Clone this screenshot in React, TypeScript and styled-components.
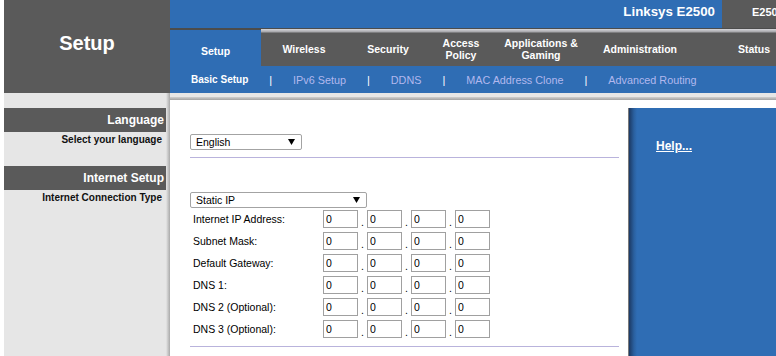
import React from "react";
import styled, { createGlobalStyle } from "styled-components";

//data
const tabs = [
  { label: "Setup", width: 91, active: true },
  { label: "Wireless", width: 86 },
  { label: "Security", width: 82 },
  { label: "Access\nPolicy", width: 64 },
  { label: "Applications &\nGaming", width: 96 },
  { label: "Administration", width: 102 },
  { label: "Status", width: 126 },
];

const subLinks = [
  "Basic Setup",
  "IPv6 Setup",
  "DDNS",
  "MAC Address Clone",
  "Advanced Routing",
];

const ipRows = [
  "Internet IP Address:",
  "Subnet Mask:",
  "Default Gateway:",
  "DNS 1:",
  "DNS 2 (Optional):",
  "DNS 3 (Optional):",
];

const GlobalStyle = createGlobalStyle`
  html, body {
    margin: 0;
    padding: 0;
    background: #ffffff;
    overflow: hidden;
  }
  body {
    font-family: "Liberation Sans", Arial, sans-serif;
  }
`;

const Arrow = () => (
  <svg width="7" height="6" viewBox="0 0 7 6">
    <polygon points="0,0 7,0 3.5,6" fill="#000" />
  </svg>
);

const Select: React.FC<{ value: string; width: number }> = ({
  value,
  width,
}) => (
  <SelectBox $width={width}>
    <span>{value}</span>
    <Arrow />
  </SelectBox>
);

const IpRow: React.FC<{ label: string }> = ({ label }) => (
  <IpLine>
    <IpLabel>{label}</IpLabel>
    {[0, 1, 2, 3].map((i) => (
      <React.Fragment key={i}>
        {i > 0 && <Dot>.</Dot>}
        <Octet defaultValue="0" />
      </React.Fragment>
    ))}
  </IpLine>
);

export default function App() {
  return (
    <Page>
      <GlobalStyle />
      <Header>
        <Brand>Setup</Brand>
        <HeaderMain>
          <TopBar>
            <Product>Linksys E2500</Product>
            <Model>E2500</Model>
          </TopBar>
          <Tabs>
            {tabs.map((t) => (
              <Tab key={t.label} $width={t.width} $active={!!t.active}>
                {t.label}
              </Tab>
            ))}
          </Tabs>
          <SubNav>
            {subLinks.map((l, i) => (
              <React.Fragment key={l}>
                {i > 0 && <Pipe>|</Pipe>}
                <SubLink $current={i === 0}>{l}</SubLink>
              </React.Fragment>
            ))}
          </SubNav>
        </HeaderMain>
      </Header>

      <Body>
        <Sidebar>
          <SectionHead>Language</SectionHead>
          <SideLabel $height={34}>Select your language</SideLabel>
          <SectionHead>Internet Setup</SectionHead>
          <SideLabel $height={40}>Internet Connection Type</SideLabel>
        </Sidebar>

        <Main>
          <TopStrip />
          <MainRow>
            <Form>
              <Select value="English" width={112} />
              <Rule />
              <TypeBlock>
                <Select value="Static IP" width={177} />
                {ipRows.map((r) => (
                  <IpRow key={r} label={r} />
                ))}
              </TypeBlock>
              <Rule $top={6} />
            </Form>
            <Help>
              <HelpLink>Help...</HelpLink>
            </Help>
          </MainRow>
        </Main>
      </Body>
    </Page>
  );
}

const Page = styled.div`
  width: 860px;
  padding-left: 4px;
  display: flex;
  flex-direction: column;
`;

const Header = styled.header`
  display: flex;
  height: 93px;
`;

const Brand = styled.div`
  width: 166px;
  flex-shrink: 0;
  background: #5a5a5a;
  color: #ffffff;
  font-size: 20px;
  font-weight: bold;
  text-align: center;
  padding-top: 32px;
  box-sizing: border-box;
`;

const HeaderMain = styled.div`
  flex: 1;
  display: flex;
  flex-direction: column;
`;

const TopBar = styled.div`
  display: flex;
  height: 28px;
`;

const Product = styled.div`
  width: 552px;
  background: #2f6db4;
  color: #ffffff;
  font-size: 13.3px;
  font-weight: bold;
  text-align: right;
  padding: 4px 7px 0 0;
  box-sizing: border-box;
`;

const Model = styled.div`
  flex: 1;
  background: #5a5a5a;
  color: #ffffff;
  font-size: 11px;
  font-weight: bold;
  padding: 6px 0 0 30px;
  box-sizing: border-box;
`;

const Tabs = styled.nav`
  display: flex;
  height: 38px;
`;

const Tab = styled.div<{ $width: number; $active: boolean }>`
  width: ${(p) => p.$width}px;
  flex-shrink: 0;
  display: flex;
  align-items: center;
  justify-content: center;
  white-space: pre-line;
  text-align: center;
  color: #ffffff;
  font-size: 10.5px;
  font-weight: bold;
  line-height: 12px;
  box-sizing: border-box;
  padding-top: ${(p) => (p.$active ? 8 : 4)}px;
  background: ${(p) =>
    p.$active
      ? "linear-gradient(to bottom, #4c4c4c 0 2px, #2f6db4 2px)"
      : "linear-gradient(to bottom, #4c4c4c 0 1px, #d8d8dc 1px, #a4a4a8 4px, #5a5a5a 5px)"};
`;

const SubNav = styled.div`
  height: 27px;
  background: #2f6db4;
  display: flex;
  align-items: center;
  padding-left: 21px;
  column-gap: 21px;
`;

const SubLink = styled.span<{ $current: boolean }>`
  font-size: ${(p) => (p.$current ? 10 : 10.8)}px;
  font-weight: ${(p) => (p.$current ? "bold" : "normal")};
  color: ${(p) => (p.$current ? "#ffffff" : "#b2b8ee")};
`;

const Pipe = styled.span`
  font-size: 11px;
  color: #ffffff;
`;

const Body = styled.div`
  display: flex;
  min-height: 280px;
`;

const Sidebar = styled.aside`
  width: 166px;
  flex-shrink: 0;
  padding-top: 15px;
  box-sizing: border-box;
  background: linear-gradient(
    to right,
    #e6e6e6 162px,
    #d6d6d6 163px,
    #a9a9a9 166px
  );
`;

const SectionHead = styled.div`
  width: 162px;
  height: 24px;
  background: #5a5a5a;
  color: #ffffff;
  font-size: 12px;
  font-weight: bold;
  text-align: right;
  padding: 5px 2px 0 0;
  box-sizing: border-box;
`;

const SideLabel = styled.div<{ $height: number }>`
  width: 162px;
  height: ${(p) => p.$height}px;
  color: #111111;
  font-size: 10px;
  font-weight: bold;
  text-align: right;
  padding: 2px 4px 0 0;
  box-sizing: border-box;
`;

const Main = styled.main`
  flex: 1;
  display: flex;
  flex-direction: column;
`;

const TopStrip = styled.div`
  height: 7px;
  background: linear-gradient(
    to bottom,
    #e6e6e6 0 4px,
    #cfcfcf 4px,
    #a2a2a2 7px
  );
`;

const MainRow = styled.div`
  flex: 1;
  display: flex;
`;

const Form = styled.section`
  width: 458px;
  flex-shrink: 0;
  padding: 34px 9px 0 20px;
  box-sizing: border-box;
  font-size: 10.5px;
  color: #000000;
`;

const SelectBox = styled.div<{ $width: number }>`
  width: ${(p) => p.$width}px;
  height: 16px;
  box-sizing: border-box;
  border: 1px solid #a3a3a3;
  border-radius: 2px;
  display: flex;
  align-items: center;
  justify-content: space-between;
  padding: 0 6px 0 5px;
  font-size: 10.5px;
  color: #000000;
`;

const Rule = styled.div<{ $top?: number }>`
  height: 1px;
  background: #b9b3dc;
  margin-top: ${(p) => p.$top ?? 7}px;
`;

const TypeBlock = styled.div`
  padding-top: 34px;
  display: flex;
  flex-direction: column;
`;

const IpLine = styled.div`
  height: 22px;
  display: flex;
  align-items: center;
  padding-left: 3px;
  &:first-of-type {
    margin-top: 1px;
  }
`;

const IpLabel = styled.span`
  width: 130px;
  flex-shrink: 0;
`;

const Octet = styled.input`
  width: 35px;
  height: 18px;
  box-sizing: border-box;
  border: 1px solid #a0a0a0;
  margin: 0;
  padding: 0 2px;
  font-family: inherit;
  font-size: 10.5px;
  color: #000000;
  outline: none;
  background: #ffffff;
`;

const Dot = styled.span`
  width: 9px;
  text-align: center;
  align-self: flex-end;
  padding-bottom: 3px;
  line-height: 10px;
`;

const Help = styled.aside`
  flex: 1;
  margin-top: 8px;
  padding: 28px 0 0 28px;
  box-sizing: border-box;
  background: linear-gradient(
    to right,
    #7a7a7a 0 1px,
    #1c3963 1px,
    #2a609f 6px,
    #2f6db4 9px
  );
`;

const HelpLink = styled.a`
  color: #ffffff;
  font-size: 12px;
  font-weight: bold;
  text-decoration: underline;
  cursor: pointer;
`;
